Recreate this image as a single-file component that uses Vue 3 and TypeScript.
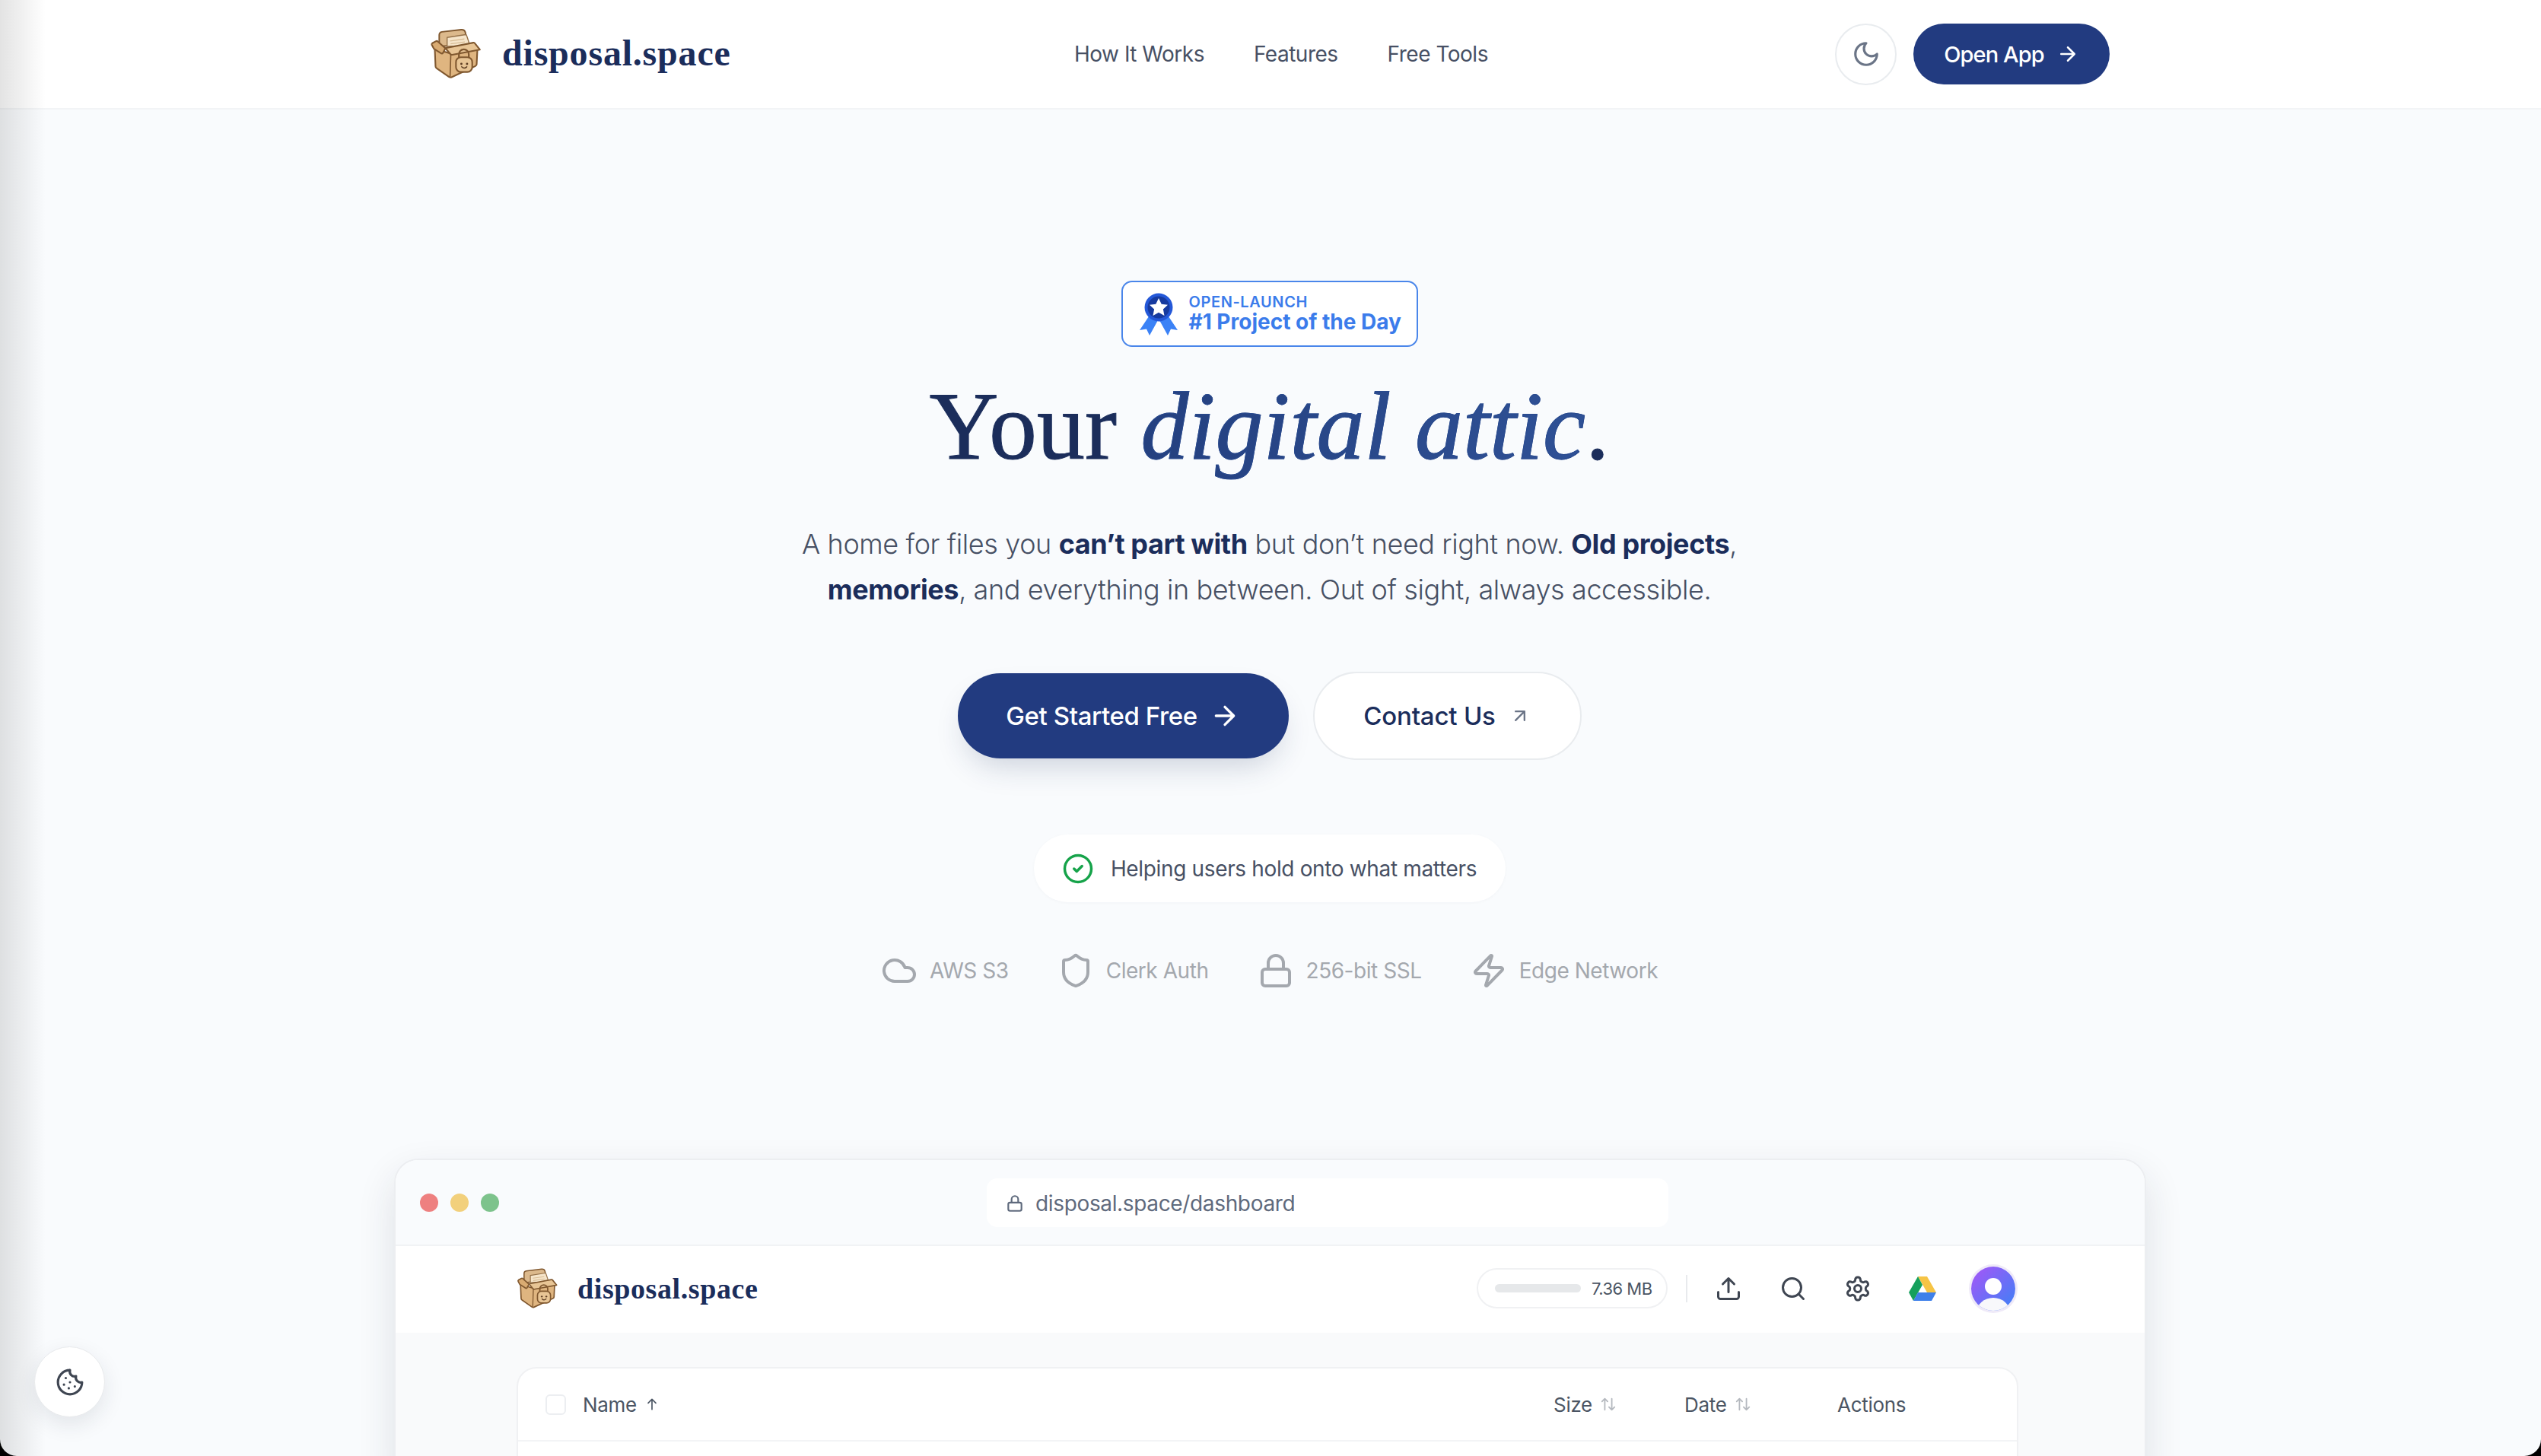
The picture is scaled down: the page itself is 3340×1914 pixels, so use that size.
<template>
  <div class="page">
    <svg class="defs" width="0" height="0">
      <symbol id="box-logo" viewBox="42 38 216 210">
        <path d="M80 112V66q0-11 11-13l78-9q14-1 17 11l9 50z" fill="#dcb98c" stroke="#80582f" stroke-width="6" stroke-linejoin="round" />
        <path d="M112 112V76l75-12q3 0 4 3l14 42z" fill="#f6e5ca" stroke="#96724a" stroke-width="4.500" stroke-linejoin="round" />
        <path d="M124 90l58-8M126 102l58-8" stroke="#d8bd96" stroke-width="4" />
        <path d="M62 122 65 193q0 5 5 8l50 35q5 3 10 1l97-45q5-2 5-8l3-62-105 20z" fill="#dfb580" stroke="#80582f" stroke-width="6.500" stroke-linejoin="round" />
        <path d="M127 146 124 236" stroke="#80582f" stroke-width="5" />
        <path d="M50 106q-2-4 2-7l15-8q4-2 7 1l31 28-10 19q-2 3-6 2L62 124q-4-1-5-5z" fill="#d9ab72" stroke="#80582f" stroke-width="6.500" stroke-linejoin="round" />
        <path d="M105 119 218 97q5-1 7 3l20 25-112 21q-5 1-8-3z" fill="#e8c595" stroke="#80582f" stroke-width="6.500" stroke-linejoin="round" />
        <path d="M160 160v-16a20 20 0 0 1 40 0v16" fill="none" stroke="#80582f" stroke-width="7" />
        <rect x="148" y="156" width="66" height="60" rx="20" fill="#e8c595" stroke="#80582f" stroke-width="6.500" />
        <circle cx="170" cy="183" r="4.500" fill="#5f3f24" />
        <circle cx="193" cy="183" r="4.500" fill="#5f3f24" />
        <path d="M171 195q10 10 21 0" fill="none" stroke="#5f3f24" stroke-width="4.500" stroke-linecap="round" />
      </symbol>
    </svg>

    <header class="site-header">
      <div class="header-inner">
        <a class="brand">
          <svg class="brand-logo"><use href="#box-logo" /></svg>
          <span class="brand-name">disposal.space</span>
        </a>
        <nav class="main-nav">
          <a v-for="link in navLinks" :key="link">{{ link }}</a>
        </nav>
        <div class="header-actions">
          <button class="theme-btn">
            <svg viewBox="0 0 24 24" class="icon"><path d="M12 3a6 6 0 0 0 9 9 9 9 0 1 1-9-9Z" /></svg>
          </button>
          <button class="open-btn">
            Open App
            <svg viewBox="0 0 24 24" class="icon"><path d="M5 12h14M12 5l7 7-7 7" /></svg>
          </button>
        </div>
      </div>
    </header>

    <section class="hero">
      <div class="award">
        <svg class="award-icon" viewBox="0 0 52 56">
          <path d="M15 28 1 49l9-1.500L14 56l11-20z" fill="#3b82f6" />
          <path d="M37 28l14 21-9-1.500L38 56 27 36z" fill="#3b82f6" />
          <circle cx="26" cy="19" r="18.500" fill="#2458d8" />
          <circle cx="26" cy="19" r="14.500" fill="#163a9f" />
          <path d="M26 7l3.700 7.800 8.300 1-6.100 5.800 1.600 8.400-7.500-4.200-7.500 4.200 1.600-8.400-6.100-5.800 8.300-1z" fill="#fff" />
        </svg>
        <div class="award-text">
          <span class="award-top">OPEN-LAUNCH</span>
          <span class="award-main">#1 Project of the Day</span>
        </div>
      </div>

      <h1 class="hero-title">Your <em>digital attic</em>.</h1>

      <p class="hero-sub">
        A home for files you <strong>can’t part with</strong> but don’t need right now. <strong>Old projects</strong>,<br />
        <strong>memories</strong>, and everything in between. Out of sight, always accessible.
      </p>

      <div class="cta-row">
        <button class="cta-primary">
          Get Started Free
          <svg viewBox="0 0 24 24" class="icon"><path d="M5 12h14M12 5l7 7-7 7" /></svg>
        </button>
        <button class="cta-secondary">
          Contact Us
          <svg viewBox="0 0 24 24" class="icon"><path d="M7 7h10v10M7 17 17 7" /></svg>
        </button>
      </div>

      <div class="trust-pill">
        <svg viewBox="0 0 24 24" class="icon"><circle cx="12" cy="12" r="10" /><path d="m9 12 2 2 4-4" /></svg>
        Helping users hold onto what matters
      </div>

      <div class="tech-row">
        <div v-for="item in techItems" :key="item.label" class="tech-item">
          <svg viewBox="0 0 24 24" class="icon" v-html="item.icon"></svg>
          {{ item.label }}
        </div>
      </div>
    </section>

    <section class="browser">
      <div class="browser-bar">
        <div class="dots">
          <i class="dot red"></i><i class="dot yellow"></i><i class="dot green"></i>
        </div>
        <div class="address">
          <svg viewBox="0 0 24 24" class="icon"><rect x="4" y="11" width="16" height="10" rx="2" /><path d="M8 11V7a4 4 0 0 1 8 0v4" /></svg>
          disposal.space/dashboard
        </div>
      </div>
      <div class="app-header">
        <a class="app-brand">
          <svg class="app-logo"><use href="#box-logo" /></svg>
          <span>disposal.space</span>
        </a>
        <div class="app-tools">
          <div class="storage">
            <i class="storage-bar"></i>
            <span>7.36 MB</span>
          </div>
          <i class="tool-divider"></i>
          <svg viewBox="0 0 24 24" class="icon tool"><path d="M21 15v4a2 2 0 0 1-2 2H5a2 2 0 0 1-2-2v-4M17 8l-5-5-5 5M12 3v12" /></svg>
          <svg viewBox="0 0 24 24" class="icon tool"><circle cx="11" cy="11" r="8" /><path d="m21 21-4.300-4.300" /></svg>
          <svg viewBox="0 0 24 24" class="icon tool"><path d="M12.220 2h-.44a2 2 0 0 0-2 2v.18a2 2 0 0 1-1 1.730l-.43.25a2 2 0 0 1-2 0l-.15-.08a2 2 0 0 0-2.730.73l-.22.38a2 2 0 0 0 .73 2.730l.15.1a2 2 0 0 1 1 1.720v.51a2 2 0 0 1-1 1.740l-.15.09a2 2 0 0 0-.73 2.730l.22.38a2 2 0 0 0 2.730.73l.15-.08a2 2 0 0 1 2 0l.43.25a2 2 0 0 1 1 1.730V20a2 2 0 0 0 2 2h.44a2 2 0 0 0 2-2v-.18a2 2 0 0 1 1-1.730l.43-.25a2 2 0 0 1 2 0l.15.08a2 2 0 0 0 2.730-.73l.22-.39a2 2 0 0 0-.73-2.730l-.15-.08a2 2 0 0 1-1-1.740v-.5a2 2 0 0 1 1-1.740l.15-.09a2 2 0 0 0 .73-2.730l-.22-.38a2 2 0 0 0-2.730-.73l-.15.08a2 2 0 0 1-2 0l-.43-.25a2 2 0 0 1-1-1.730V4a2 2 0 0 0-2-2z" /><circle cx="12" cy="12" r="3" /></svg>
          <svg viewBox="0 0 36 32" class="drive">
            <path d="M12 0h12l12 21H24z" fill="#f6c445" />
            <path d="M12 0 0 21l6 11 12-21z" fill="#16a05d" />
            <path d="M12 21h24l-6 11H6z" fill="#3f80ea" />
          </svg>
          <div class="avatar">
            <i class="avatar-head"></i>
            <i class="avatar-body"></i>
          </div>
        </div>
      </div>
      <div class="app-body">
        <div class="file-table">
          <div class="table-head">
            <span class="col-name">
              <i class="checkbox"></i>Name
              <svg viewBox="0 0 24 24" class="icon sort"><path d="M12 20V4M6 10l6-6 6 6" /></svg>
            </span>
            <span class="col-size">Size<svg viewBox="0 0 24 24" class="icon sort muted"><path d="M7 20V4M3 8l4-4 4 4M17 4v16M13 16l4 4 4-4" /></svg></span>
            <span class="col-date">Date<svg viewBox="0 0 24 24" class="icon sort muted"><path d="M7 20V4M3 8l4-4 4 4M17 4v16M13 16l4 4 4-4" /></svg></span>
            <span class="col-actions">Actions</span>
          </div>
        </div>
      </div>
    </section>

    <div class="edge-shade"></div>
    <button class="cookie-btn">
      <svg viewBox="0 0 24 24" class="icon"><path d="M12 2a10 10 0 1 0 10 10 4 4 0 0 1-5-5 4 4 0 0 1-5-5M8.500 8.500v.01M16 15.500v.01M12 12v.01M11 17v.01M7 14v.01" /></svg>
    </button>
  </div>
</template>

<script setup lang="ts">
const navLinks = ['How It Works', 'Features', 'Free Tools']

interface TechItem {
  label: string
  icon: string
}

const techItems: TechItem[] = [
  { label: 'AWS S3', icon: '<path d="M17.500 19H9a7 7 0 1 1 6.710-9h1.790a4.500 4.500 0 1 1 0 9Z"/>' },
  { label: 'Clerk Auth', icon: '<path d="M20 13c0 5-3.500 7.500-7.660 8.950a1 1 0 0 1-.67-.01C7.500 20.500 4 18 4 13V6a1 1 0 0 1 1-1c2 0 4.500-1.200 6.240-2.720a1.170 1.170 0 0 1 1.520 0C14.510 3.810 17 5 19 5a1 1 0 0 1 1 1z"/>' },
  { label: '256-bit SSL', icon: '<rect x="3" y="11" width="18" height="11" rx="2"/><path d="M7 11V7a5 5 0 0 1 10 0v4"/>' },
  { label: 'Edge Network', icon: '<path d="M4 14a1 1 0 0 1-.78-1.630l9.900-10.200a.5.5 0 0 1 .86.46l-1.920 6.020A1 1 0 0 0 13 10h7a1 1 0 0 1 .78 1.630l-9.900 10.200a.5.5 0 0 1-.86-.46l1.920-6.020A1 1 0 0 0 11 14z"/>' }
]
</script>

<style>
html,
body {
  margin: 0;
  background: #000;
}
</style>

<style scoped>
.page {
  position: relative;
  width: 3340px;
  height: 1914px;
  overflow: hidden;
  border-radius: 0 0 22px 22px;
  background: #f9fbfd;
  font-family: Inter, "Noto Sans", sans-serif;
  color: #1b2d5b;
}

.defs {
  position: absolute;
}

.icon {
  fill: none;
  stroke: currentColor;
  stroke-width: 2;
  stroke-linecap: round;
  stroke-linejoin: round;
}

button {
  font-family: inherit;
  cursor: pointer;
}

.site-header {
  height: 144px;
  box-sizing: border-box;
  background: #fff;
  border-bottom: 2px solid #f2f4f6;
}

.header-inner {
  width: 2208px;
  height: 142px;
  margin-left: 565px;
  display: flex;
  align-items: center;
}

.brand {
  display: flex;
  align-items: center;
  gap: 25px;
  width: 847px;
}

.brand-logo {
  width: 70px;
  height: 68px;
}

.brand-name {
  font-family: "Liberation Serif", serif;
  font-weight: 700;
  font-size: 48px;
  line-height: 56px;
  letter-spacing: 0.8px;
  color: #1b2d5b;
  margin-top: -3px;
}

.main-nav {
  display: flex;
  gap: 65px;
  font-size: 28px;
  letter-spacing: -0.5px;
  color: #475064;
}

.header-actions {
  margin-left: auto;
  display: flex;
  align-items: center;
  gap: 22px;
}

.theme-btn {
  width: 81px;
  height: 81px;
  border-radius: 50%;
  border: 2px solid #e9ecef;
  background: #fff;
  color: #6b7587;
  display: flex;
  align-items: center;
  justify-content: center;
  padding: 0;
}

.theme-btn .icon {
  width: 38px;
  height: 38px;
}

.open-btn {
  width: 258px;
  height: 80px;
  border-radius: 40px;
  border: 0;
  background: #223b80;
  color: #fff;
  font-size: 29px;
  font-weight: 500;
  letter-spacing: -0.9px;
  display: flex;
  align-items: center;
  justify-content: center;
  gap: 16px;
}

.open-btn .icon {
  width: 30px;
  height: 30px;
}

.hero {
  display: flex;
  flex-direction: column;
  align-items: center;
  padding: 225px 3px 0 0;
}

.award {
  width: 390px;
  height: 87px;
  box-sizing: border-box;
  border: 2px solid #4a86ea;
  border-radius: 14px;
  background: #fff;
  display: flex;
  align-items: center;
  gap: 14px;
  padding-left: 21px;
}

.award-icon {
  width: 52px;
  height: 56px;
}

.award-text {
  display: flex;
  flex-direction: column;
  color: #3b7ceb;
  font-weight: 600;
  margin-top: -2px;
}

.award-top {
  font-size: 20px;
  line-height: 22px;
  letter-spacing: 0.6px;
}

.award-main {
  font-size: 28px;
  line-height: 30px;
  font-weight: 700;
}

.hero-title {
  margin: 30px 0 0;
  font-family: "Liberation Serif", serif;
  font-weight: 400;
  font-size: 126px;
  line-height: 150px;
  color: #1b2d5b;
  -webkit-text-stroke: 1px #1b2d5b;
}

.hero-title em {
  background: linear-gradient(90deg, #24407f, #2f5196);
  -webkit-background-clip: text;
  background-clip: text;
  color: transparent;
  -webkit-text-stroke: 1px #294a8e;
}

.hero-sub {
  margin: 49px 0 0;
  text-align: center;
  font-size: 36px;
  line-height: 60px;
  letter-spacing: -0.4px;
  font-weight: 300;
  color: #475064;
}

.hero-sub strong {
  font-weight: 700;
  color: #1b2d5b;
}

.cta-row {
  margin-top: 78px;
  display: flex;
  align-items: center;
  gap: 32px;
}

.cta-primary {
  width: 435px;
  height: 112px;
  border: 0;
  border-radius: 56px;
  background: #223b80;
  color: #fff;
  font-size: 33px;
  font-weight: 500;
  letter-spacing: -0.4px;
  display: flex;
  align-items: center;
  justify-content: center;
  gap: 16px;
  box-shadow: 0 20px 40px -12px rgba(30, 50, 90, 0.22);
}

.cta-primary .icon {
  width: 40px;
  height: 40px;
}

.cta-secondary {
  width: 353px;
  height: 116px;
  box-sizing: border-box;
  border: 2px solid #e9ecef;
  border-radius: 58px;
  background: #fff;
  color: #1b2d5b;
  font-size: 33px;
  font-weight: 500;
  letter-spacing: -0.2px;
  display: flex;
  align-items: center;
  justify-content: center;
  gap: 18px;
}

.cta-secondary .icon {
  width: 28px;
  height: 28px;
  color: #6b7587;
}

.trust-pill {
  margin-top: 98px;
  width: 620px;
  height: 89px;
  border-radius: 45px;
  background: #fff;
  color: #475064;
  font-size: 28px;
  letter-spacing: -0.35px;
  display: flex;
  align-items: center;
  justify-content: center;
  gap: 22px;
  box-shadow: 0 1px 4px rgba(30, 40, 60, 0.03);
}

.trust-pill .icon {
  width: 42px;
  height: 42px;
  color: #16a34a;
}

.tech-row {
  margin-top: 66px;
  display: flex;
  gap: 64px;
  color: #a4a8ae;
  font-size: 28px;
  letter-spacing: -0.45px;
}

.tech-item {
  display: flex;
  align-items: center;
  gap: 16px;
}

.tech-item .icon {
  width: 48px;
  height: 48px;
}

.browser {
  position: absolute;
  left: 518px;
  top: 1523px;
  width: 2303px;
  height: 430px;
  box-sizing: border-box;
  border: 2px solid #eceef1;
  border-radius: 32px;
  background: #fff;
  box-shadow: 0 20px 50px rgba(30, 40, 60, 0.12);
  overflow: hidden;
}

.browser-bar {
  height: 113px;
  box-sizing: border-box;
  background: #f9fbfd;
  border-bottom: 2px solid #f1f3f5;
  display: flex;
  align-items: center;
}

.dots {
  display: flex;
  gap: 16px;
  margin-left: 32px;
}

.dot {
  width: 24px;
  height: 24px;
  border-radius: 50%;
}

.dot.red { background: #ee8080; }
.dot.yellow { background: #f2d07c; }
.dot.green { background: #7dc38c; }

.address {
  margin-left: 641px;
  width: 896px;
  height: 64px;
  box-sizing: border-box;
  padding: 2px 0 0 24px;
  border-radius: 14px;
  background: #fff;
  color: #5f6a7d;
  font-size: 28px;
  letter-spacing: -0.35px;
  display: flex;
  align-items: center;
  gap: 14px;
}

.address .icon {
  width: 26px;
  height: 26px;
}

.app-header {
  height: 114px;
  box-sizing: border-box;
  display: flex;
  align-items: center;
  padding: 0 0 3px 159px;
  background: #fff;
}

.app-brand {
  display: flex;
  align-items: center;
  gap: 24px;
  font-family: "Liberation Serif", serif;
  font-weight: 700;
  font-size: 38px;
  letter-spacing: 0.6px;
  color: #1b2d5b;
}

.app-logo {
  width: 56px;
  height: 56px;
}

.app-tools {
  margin-left: auto;
  margin-right: 170px;
  display: flex;
  align-items: center;
}

.storage {
  width: 251px;
  height: 53px;
  box-sizing: border-box;
  border: 2px solid #f0f1f3;
  border-radius: 27px;
  display: flex;
  align-items: center;
  gap: 14px;
  padding-left: 22px;
  font-size: 22px;
  letter-spacing: -0.5px;
  color: #4b5563;
}

.storage-bar {
  width: 113px;
  height: 11px;
  border-radius: 6px;
  background: #e6e8ea;
}

.tool-divider {
  width: 2px;
  height: 36px;
  margin: 0 36px 0 24px;
  background: #e8eaed;
}

.tool {
  width: 36px;
  height: 36px;
  margin-right: 49px;
  color: #3f4652;
}

.drive {
  width: 36px;
  height: 32px;
  margin-right: 46px;
}

.avatar {
  position: relative;
  width: 58px;
  height: 58px;
  border-radius: 50%;
  overflow: hidden;
  background: linear-gradient(135deg, #a855f7, #3b82f6);
  box-shadow: 0 0 0 3px #efeaf8;
}

.avatar-head {
  position: absolute;
  left: 18px;
  top: 15px;
  width: 22px;
  height: 22px;
  border-radius: 50%;
  background: #fff;
}

.avatar-body {
  position: absolute;
  left: 7px;
  top: 41px;
  width: 44px;
  height: 40px;
  border-radius: 50%;
  background: #f8f8fb;
}

.app-body {
  height: 300px;
  padding: 45px 166px 0 159px;
  background: #f9fafb;
}

.file-table {
  height: 300px;
  border: 2px solid #f0f1f3;
  border-radius: 26px;
  background: #fff;
}

.table-head {
  height: 94px;
  border-bottom: 2px solid #f3f4f6;
  display: flex;
  align-items: center;
  font-size: 26px;
  letter-spacing: -0.3px;
  color: #4b5563;
}

.col-name {
  display: flex;
  align-items: center;
  margin-left: 36px;
  width: 1325px;
}

.col-size,
.col-date {
  display: flex;
  align-items: center;
}

.col-size { width: 172px; }
.col-date { width: 201px; }

.checkbox {
  width: 27px;
  height: 27px;
  box-sizing: border-box;
  border: 2px solid #eceef1;
  border-radius: 6px;
  margin-right: 22px;
}

.sort {
  width: 20px;
  height: 20px;
  margin-left: 10px;
}

.sort.muted {
  width: 22px;
  height: 22px;
  margin-left: 10px;
  color: #b5b9bf;
}

.edge-shade {
  position: absolute;
  left: 0;
  top: 0;
  bottom: 0;
  width: 60px;
  background: linear-gradient(90deg, rgba(0, 0, 0, 0.11), rgba(0, 0, 0, 0));
  pointer-events: none;
}

.cookie-btn {
  position: absolute;
  left: 45px;
  top: 1770px;
  width: 93px;
  height: 93px;
  border-radius: 50%;
  border: 1px solid #e8eaec;
  background: #fff;
  color: #3f4652;
  display: flex;
  align-items: center;
  justify-content: center;
  padding: 0;
  box-shadow: 0 10px 28px rgba(30, 40, 60, 0.1);
}

.cookie-btn .icon {
  width: 38px;
  height: 38px;
}
</style>
